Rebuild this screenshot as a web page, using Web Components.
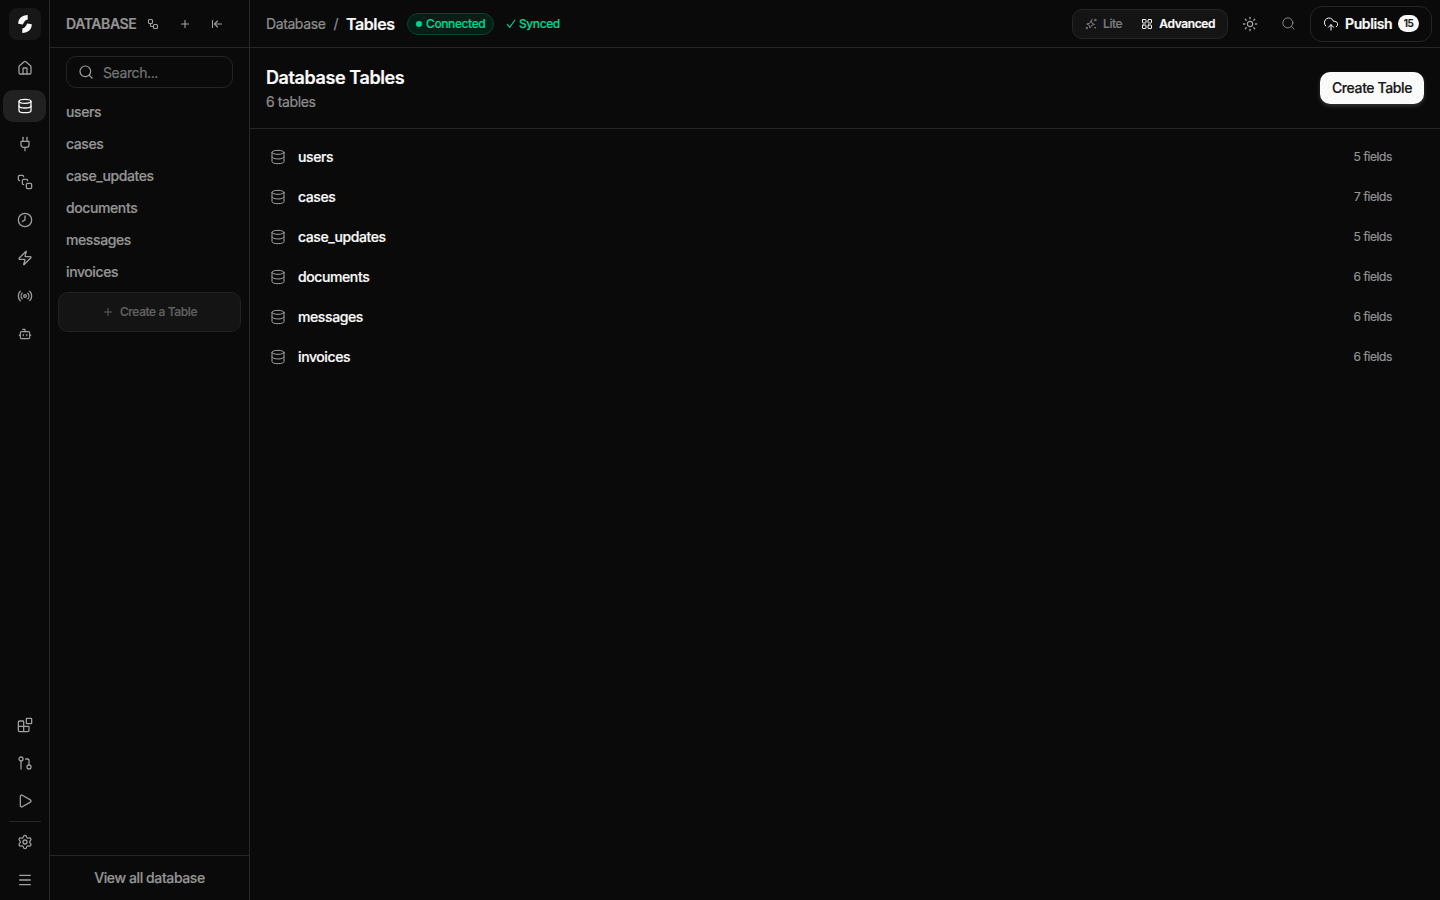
<!DOCTYPE html>
<html lang="en">
<head>
<meta charset="utf-8">
<title>Database Tables</title>
<style>
    html, body {
        margin: 0;
        height: 100%;
        overflow: hidden;
        background: #0a0a0a;
    }
    body {
        --bg: #0a0a0a;
        --line: #262626;
        --muted: #8f8f8f;
        --text: #fafafa;
        --green: #00d492;
        font-family: Inter, "Liberation Sans", sans-serif;
        font-size: 14px;
        line-height: 20px;
        letter-spacing: -0.4px;
        -webkit-text-stroke: 0.2px;
        color: var(--text);
    }
</style>
</head>
<body>
<app-shell></app-shell>

<script>
const ICONS = {
    house: '<path d="M15 21v-8a1 1 0 0 0-1-1h-4a1 1 0 0 0-1 1v8"/><path d="M3 10a2 2 0 0 1 .709-1.528l7-6a2 2 0 0 1 2.582 0l7 6A2 2 0 0 1 21 10v9a2 2 0 0 1-2 2H5a2 2 0 0 1-2-2z"/>',
    database: '<ellipse cx="12" cy="5" rx="9" ry="3"/><path d="M3 5v14a9 3 0 0 0 18 0V5"/><path d="M3 12a9 3 0 0 0 18 0"/>',
    plug: '<path d="M12 22v-5"/><path d="M9 8V2"/><path d="M15 8V2"/><path d="M18 8v5a4 4 0 0 1-4 4h-4a4 4 0 0 1-4-4V8Z"/>',
    stack: '<path d="M4 10c-1.1 0-2-.9-2-2V4c0-1.1.9-2 2-2h4c1.1 0 2 .9 2 2"/><path d="M10 16c-1.1 0-2-.9-2-2v-4c0-1.1.9-2 2-2h4c1.1 0 2 .9 2 2"/><rect width="8" height="8" x="14" y="14" rx="2"/>',
    clock: '<circle cx="12" cy="12" r="10"/><path d="M12 6v6l-4 2"/>',
    zap: '<path d="M4 14a1 1 0 0 1-.78-1.63l9.9-10.2a.5.5 0 0 1 .86.46l-1.92 6.02A1 1 0 0 0 13 10h7a1 1 0 0 1 .78 1.63l-9.9 10.2a.5.5 0 0 1-.86-.46l1.92-6.02A1 1 0 0 0 11 14z"/>',
    radio: '<path d="M4.9 19.1C1 15.2 1 8.8 4.9 4.9"/><path d="M7.8 16.2c-2.3-2.3-2.3-6.1 0-8.5"/><circle cx="12" cy="12" r="2"/><path d="M16.2 7.8c2.3 2.3 2.3 6.1 0 8.5"/><path d="M19.1 4.9C23 8.8 23 15.1 19.1 19"/>',
    bot: '<path d="M12 8V4H8"/><rect width="16" height="12" x="4" y="8" rx="2"/><path d="M2 14h2"/><path d="M20 14h2"/><path d="M15 13v2"/><path d="M9 13v2"/>',
    blocks: '<path d="M10 22V7a1 1 0 0 0-1-1H4a2 2 0 0 0-2 2v12a2 2 0 0 0 2 2h12a2 2 0 0 0 2-2v-5a1 1 0 0 0-1-1H2"/><rect x="14" y="2" width="8" height="8" rx="1"/>',
    pull: '<circle cx="18" cy="18" r="3"/><circle cx="6" cy="6" r="3"/><path d="M13 6h3a2 2 0 0 1 2 2v7"/><path d="M6 9v12"/>',
    play: '<path d="M5 5a2 2 0 0 1 3.008-1.728l11.997 6.998a2 2 0 0 1 .003 3.458l-12 7A2 2 0 0 1 5 19z"/>',
    settings: '<path d="M9.671 4.136a2.34 2.34 0 0 1 4.659 0 2.34 2.34 0 0 0 3.319 1.915 2.34 2.34 0 0 1 2.33 4.033 2.34 2.34 0 0 0 0 3.831 2.34 2.34 0 0 1-2.33 4.033 2.34 2.34 0 0 0-3.319 1.915 2.34 2.34 0 0 1-4.659 0 2.34 2.34 0 0 0-3.32-1.915 2.34 2.34 0 0 1-2.33-4.033 2.34 2.34 0 0 0 0-3.831A2.34 2.34 0 0 1 6.35 6.051a2.34 2.34 0 0 0 3.319-1.915"/><circle cx="12" cy="12" r="3"/>',
    menu: '<path d="M4 5h16"/><path d="M4 12h16"/><path d="M4 19h16"/>',
    workflow: '<rect width="8" height="8" x="3" y="3" rx="2"/><path d="M7 11v4a2 2 0 0 0 2 2h4"/><rect width="8" height="8" x="13" y="13" rx="2"/>',
    plus: '<path d="M5 12h14"/><path d="M12 5v14"/>',
    collapse: '<path d="M3 19V5"/><path d="m13 6-6 6 6 6"/><path d="M7 12h14"/>',
    search: '<circle cx="11" cy="11" r="8"/><path d="m21 21-4.3-4.3"/>',
    check: '<path d="M3 13l6 7L21 3"/>',
    sparkles: '<path d="M13 5l1 5.500 5 2.500-5.500 1.500L10 20l-1.500-5.500-5-2.500L9 10.500z"/><circle cx="20.500" cy="4" r="1.500"/><circle cx="20" cy="19.500" r=".8"/><circle cx="3.500" cy="20" r="1.500"/><path d="M14 2.500h.5"/>',
    grid: '<rect width="7" height="7" x="3" y="3" rx="1"/><rect width="7" height="7" x="14" y="3" rx="1"/><rect width="7" height="7" x="14" y="14" rx="1"/><rect width="7" height="7" x="3" y="14" rx="1"/>',
    sun: '<circle cx="12" cy="12" r="4"/><path d="M12 2v2"/><path d="M12 20v2"/><path d="m4.930 4.930 1.410 1.410"/><path d="m17.660 17.660 1.410 1.410"/><path d="M2 12h2"/><path d="M20 12h2"/><path d="m6.340 17.660-1.410 1.410"/><path d="m19.070 4.930-1.410 1.410"/>',
    upload: '<path d="M12 13v8"/><path d="M4 14.899A7 7 0 1 1 15.710 8h1.790a4.500 4.500 0 0 1 2.500 8.242"/><path d="m8 17 4-4 4 4"/>'
};

const TABLES = [
    { name: 'users', fields: 5 },
    { name: 'cases', fields: 7 },
    { name: 'case_updates', fields: 5 },
    { name: 'documents', fields: 6 },
    { name: 'messages', fields: 6 },
    { name: 'invoices', fields: 6 }
];

class UiIcon extends HTMLElement {
    constructor() {
        super();
        this.attachShadow({mode: 'open'});
    }
    connectedCallback() {
        const size = this.getAttribute('size') || 16;
        const stroke = this.getAttribute('stroke') || 1.5;
        this.shadowRoot.innerHTML = `
        <style>
            :host { display: block; flex: none; width: ${size}px; height: ${size}px; }
            svg { display: block; }
        </style>
        <svg width="${size}" height="${size}" viewBox="0 0 24 24" fill="none" stroke="currentColor"
            stroke-width="${stroke}" stroke-linecap="round" stroke-linejoin="round">${ICONS[this.getAttribute('name')]}</svg>
        `;
    }
}
customElements.define('ui-icon', UiIcon);

class RailButton extends HTMLElement {
    constructor() {
        super();
        this.attachShadow({mode: 'open'});
    }
    connectedCallback() {
        this.shadowRoot.innerHTML = `
        <style>
            :host {
                display: flex;
                align-items: center;
                justify-content: center;
                width: 43px;
                height: 32px;
                border-radius: 10px;
                color: #a1a1a1;
            }
            :host([active]) {
                background: #212121;
                color: var(--text);
            }
        </style>
        <ui-icon name="${this.getAttribute('icon')}" size="${this.getAttribute('size') || 16}" stroke="1.9"></ui-icon>
        `;
    }
}
customElements.define('rail-button', RailButton);

class NavRail extends HTMLElement {
    constructor() {
        super();
        this.attachShadow({mode: 'open'});
    }
    connectedCallback() {
        this.shadowRoot.innerHTML = `
        <style>
            :host {
                display: flex;
                flex-direction: column;
                align-items: center;
                gap: 6px;
                box-sizing: border-box;
                padding: 8px 0 4px;
                border-right: 1px solid var(--line);
            }
            .logo {
                display: flex;
                align-items: center;
                justify-content: center;
                width: 32px;
                height: 32px;
                margin-bottom: 6px;
                border-radius: 8px;
                background: #171717;
            }
            .spacer { flex: 1; }
            .rule {
                width: 32px;
                height: 1px;
                background: var(--line);
                margin: -2px 0 -2px;
            }
        </style>
        <div class="logo">
            <svg width="14" height="18" viewBox="0 0 14 18" fill="#fafafa">
                <path d="M9.700 0V4.600C7.300 4.600 6.300 6.800 4.800 9.600L0.200 8.800C0.100 3.800 4 0.100 9.700 0Z"/>
                <path d="M4.300 18V13.400C6.700 13.400 7.700 11.200 9.200 8.400L13.800 9.200C13.900 14.200 10 17.900 4.300 18Z"/>
            </svg>
        </div>
        <rail-button icon="house"></rail-button>
        <rail-button icon="database" active></rail-button>
        <rail-button icon="plug"></rail-button>
        <rail-button icon="stack"></rail-button>
        <rail-button icon="clock"></rail-button>
        <rail-button icon="zap"></rail-button>
        <rail-button icon="radio"></rail-button>
        <rail-button icon="bot" size="14"></rail-button>
        <div class="spacer"></div>
        <rail-button icon="blocks"></rail-button>
        <rail-button icon="pull"></rail-button>
        <rail-button icon="play"></rail-button>
        <div class="rule"></div>
        <rail-button icon="settings"></rail-button>
        <rail-button icon="menu"></rail-button>
        `;
    }
}
customElements.define('nav-rail', NavRail);

class DatabasePanel extends HTMLElement {
    constructor() {
        super();
        this.attachShadow({mode: 'open'});
    }
    connectedCallback() {
        this.shadowRoot.innerHTML = `
        <style>
            :host {
                display: flex;
                flex-direction: column;
                box-sizing: border-box;
                border-right: 1px solid var(--line);
                color: #949494;
                font-weight: 500;
            }
            header {
                display: flex;
                align-items: center;
                height: 47px;
                padding: 0 16px;
                border-bottom: 1px solid var(--line);
            }
            .title {
                width: 71px;
                font-weight: 600;
                white-space: nowrap;
            }
            .tools {
                display: flex;
                gap: 20px;
                margin-left: 10px;
                color: #a1a1a1;
            }
            .search {
                display: flex;
                align-items: center;
                gap: 9px;
                box-sizing: border-box;
                height: 32px;
                margin: 8px 16px;
                padding: 1px 12px 0 11px;
                border: 1px solid var(--line);
                border-radius: 10px;
                font-weight: 400;
                color: #757575;
            }
            .search ui-icon { color: #a1a1a1; margin-top: -1px; }
            .item {
                height: 32px;
                line-height: 32px;
                padding-left: 16px;
            }
            .create {
                display: flex;
                align-items: center;
                justify-content: center;
                gap: 6px;
                box-sizing: border-box;
                height: 40px;
                margin: 4px 8px;
                border: 1px solid #222;
                border-radius: 10px;
                background: #141414;
                color: #616161;
                font-size: 12px;
            }
            footer {
                margin-top: auto;
                height: 44px;
                line-height: 44px;
                border-top: 1px solid var(--line);
                text-align: center;
            }
        </style>
        <header>
            <div class="title">DATABASE</div>
            <div class="tools">
                <ui-icon name="workflow" size="12" stroke="2.2"></ui-icon>
                <ui-icon name="plus" size="12" stroke="2.2"></ui-icon>
                <ui-icon name="collapse" size="12" stroke="2.2"></ui-icon>
            </div>
        </header>
        <div class="search"><ui-icon name="search" stroke="1.8"></ui-icon><span>Search...</span></div>
        <div>${TABLES.map(t => `<div class="item">${t.name}</div>`).join('')}</div>
        <div class="create"><ui-icon name="plus" size="12" stroke="2"></ui-icon><span>Create a Table</span></div>
        <footer>View all database</footer>
        `;
    }
}
customElements.define('database-panel', DatabasePanel);

class TopBar extends HTMLElement {
    constructor() {
        super();
        this.attachShadow({mode: 'open'});
    }
    connectedCallback() {
        this.shadowRoot.innerHTML = `
        <style>
            :host {
                display: flex;
                align-items: center;
                justify-content: space-between;
                box-sizing: border-box;
                height: 48px;
                padding: 0 8px 0 16px;
                border-bottom: 1px solid var(--line);
                white-space: nowrap;
            }
            .left, .right, .pill, .synced, .toggle, .mode, .publish {
                display: flex;
                align-items: center;
            }
            .crumb { color: var(--muted); width: 59.5px; }
            .slash { color: var(--muted); width: 4.5px; margin: 0 8px; }
            .page { font-size: 16px; font-weight: 600; width: 49px; }
            .pill {
                box-sizing: border-box;
                gap: 4px;
                width: 87px;
                height: 22px;
                margin-left: 12px;
                padding-left: 8px;
                border: 1px solid #044430;
                border-radius: 11px;
                background: #071e17;
                color: var(--green);
                font-size: 12px;
                font-weight: 500;
            }
            .dot { width: 6px; height: 6px; border-radius: 50%; background: var(--green); }
            .synced { gap: 3px; margin-left: 12px; color: var(--green); font-size: 12px; font-weight: 500; }
            .toggle {
                box-sizing: border-box;
                width: 156px;
                height: 30px;
                padding: 0 12px;
                border: 1px solid var(--line);
                border-radius: 10px;
                background: #141414;
                font-size: 12px;
            }
            .mode { gap: 6px; font-weight: 600; }
            .mode.off { color: #7d7d7d; width: 57px; font-weight: 500; }
            .tool { color: #a1a1a1; }
            .publish {
                box-sizing: border-box;
                width: 122px;
                height: 36px;
                padding-left: 12px;
                border: 1px solid var(--line);
                border-radius: 12px;
                font-weight: 600;
            }
            .publish span { width: 47px; margin-left: 6px; }
            .count {
                width: 21px;
                height: 17px;
                line-height: 17px;
                margin-left: 6px;
                border-radius: 9px;
                background: var(--text);
                color: #171717;
                font-size: 10px;
                text-align: center;
            }
        </style>
        <div class="left">
            <div class="crumb">Database</div>
            <div class="slash">/</div>
            <div class="page">Tables</div>
            <div class="pill"><div class="dot"></div>Connected</div>
            <div class="synced"><ui-icon name="check" size="10" stroke="2.6"></ui-icon>Synced</div>
        </div>
        <div class="right">
            <div class="toggle">
                <div class="mode off"><ui-icon name="sparkles" size="12" stroke="2"></ui-icon>Lite</div>
                <div class="mode"><ui-icon name="grid" size="12" stroke="2"></ui-icon>Advanced</div>
            </div>
            <ui-icon class="tool" name="sun" stroke="1.9" style="margin-left: 14px"></ui-icon>
            <ui-icon class="tool" name="search" size="15" stroke="1.3" style="margin: 0 14.5px 0 22.5px"></ui-icon>
            <div class="publish"><ui-icon name="upload" stroke="1.5"></ui-icon><span>Publish</span><div class="count">15</div></div>
        </div>
        `;
    }
}
customElements.define('top-bar', TopBar);

class TableRow extends HTMLElement {
    constructor() {
        super();
        this.attachShadow({mode: 'open'});
    }
    connectedCallback() {
        this.shadowRoot.innerHTML = `
        <style>
            :host {
                display: flex;
                align-items: center;
                gap: 12px;
                height: 40px;
                padding: 0 48px 0 20px;
                font-weight: 500;
            }
            ui-icon { color: #a1a1a1; }
            .fields {
                margin-left: auto;
                color: #949494;
                font-size: 12px;
                font-weight: 400;
            }
        </style>
        <ui-icon name="database" stroke="1.5"></ui-icon>
        <slot></slot>
        <div class="fields">${this.getAttribute('fields')} fields</div>
        `;
    }
}
customElements.define('table-row', TableRow);

class TablesPage extends HTMLElement {
    constructor() {
        super();
        this.attachShadow({mode: 'open'});
    }
    connectedCallback() {
        this.shadowRoot.innerHTML = `
        <style>
            :host { display: block; }
            .head {
                display: flex;
                align-items: center;
                justify-content: space-between;
                box-sizing: border-box;
                height: 81px;
                padding: 0 16px;
                border-bottom: 1px solid var(--line);
            }
            h1 { margin: 0; font-size: 18px; line-height: 28px; font-weight: 600; }
            p { margin: 0; color: var(--muted); }
            button {
                width: 104px;
                height: 32px;
                padding: 0;
                border: 0;
                border-radius: 10px;
                background: var(--text);
                color: #171717;
                font: 500 14px/20px Inter, "Liberation Sans", sans-serif;
                letter-spacing: inherit;
                box-shadow: 0 2px 4px rgba(255, 255, 255, .18);
            }
            .list { padding-top: 8px; }
        </style>
        <div class="head">
            <div>
                <h1>Database Tables</h1>
                <p>6 tables</p>
            </div>
            <button>Create Table</button>
        </div>
        <div class="list">${TABLES.map(t => `<table-row fields="${t.fields}">${t.name}</table-row>`).join('')}</div>
        `;
    }
}
customElements.define('tables-page', TablesPage);

class AppShell extends HTMLElement {
    constructor() {
        super();
        this.attachShadow({mode: 'open'});
        this.shadowRoot.innerHTML = `
        <style>
            :host {
                display: grid;
                grid-template-columns: 50px 200px 1fr;
                height: 100vh;
                background: var(--bg);
            }
        </style>
        <nav-rail></nav-rail>
        <database-panel></database-panel>
        <main>
            <top-bar></top-bar>
            <tables-page></tables-page>
        </main>
        `;
    }
}
customElements.define('app-shell', AppShell);
</script>
</body>
</html>
